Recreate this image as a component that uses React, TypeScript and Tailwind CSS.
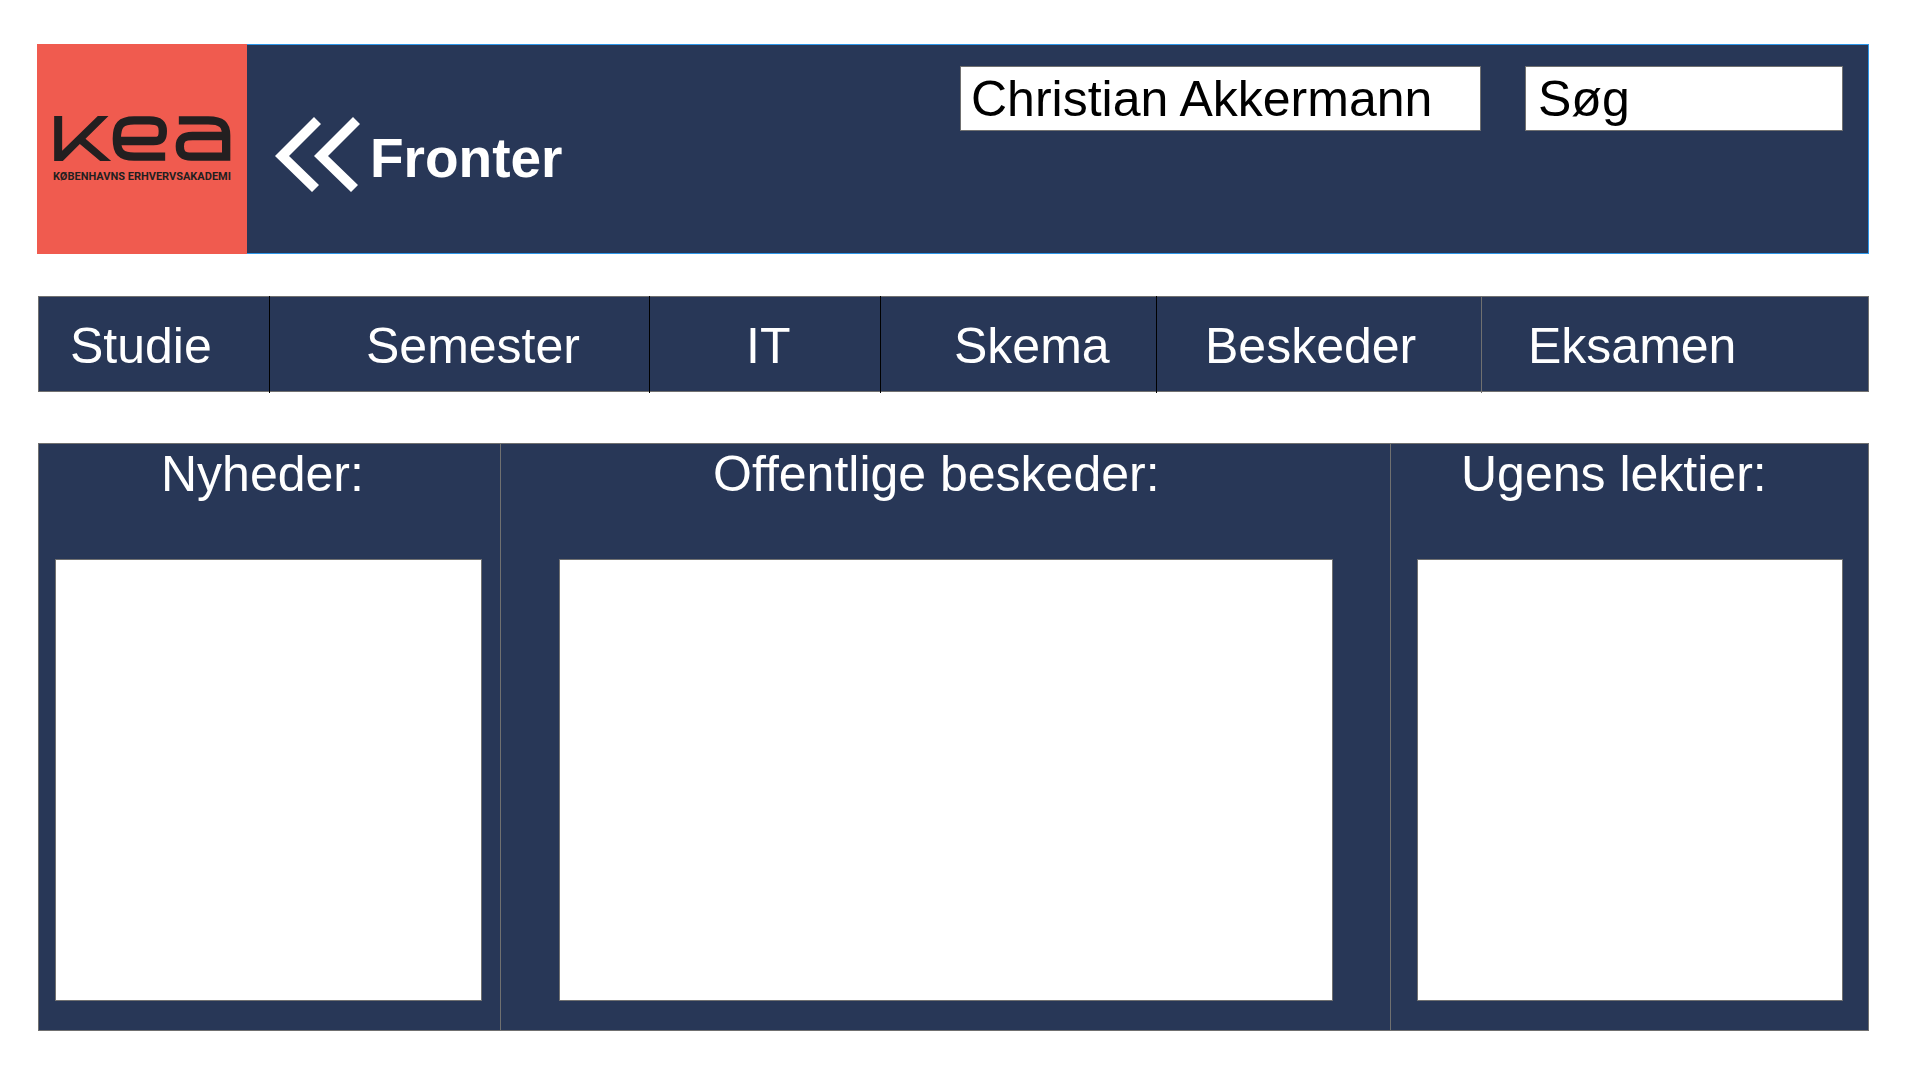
const navItems = [
  { label: "Studie", style: "pl-[31px]" },
  { label: "Semester", style: "border-l border-black pl-24" },
  { label: "IT", style: "border-l border-black pl-24" },
  { label: "Skema", style: "border-l border-black pl-[73px]" },
  { label: "Beskeder", style: "border-l border-black pl-12" },
  { label: "Eksamen", style: "border-l border-[#707070] pl-[46px]" },
];

const panels = [
  { title: "Nyheder:", column: "pl-4 pr-[18px]", heading: "pl-[106px]" },
  {
    title: "Offentlige beskeder:",
    column: "border-l border-[#707070] pl-[58px] pr-[57px]",
    heading: "pl-[154px]",
  },
  {
    title: "Ugens lektier:",
    column: "border-l border-[#707070] pl-[26px] pr-[25px]",
    heading: "pl-11",
  },
];

function KeaMark() {
  return (
    <svg viewBox="0 0 530 135" className="h-[45px] w-[177px]" role="img" aria-label="kea">
      <path
        d="M0 0H24V104L131 0H163L94 68L171 135H138L77 84L26 135H0Z"
        fill="#231f20"
      />
      <g fill="none" stroke="#231f20" strokeWidth="25">
        <path d="M333 122H240C200 122 188 108 188 68S200 13 240 13H286C318 13 326 24 326 45S322 75 298 75H190" />
        <path d="M374 13H462C503 13 516 26 516 58V122H412C386 122 377 114 377 91S388 60 415 60H516" />
      </g>
    </svg>
  );
}

function Chevrons() {
  return (
    <svg viewBox="0 0 255 225" className="h-[75px] w-[85px] shrink-0" fill="#fff" aria-hidden="true">
      <path d="M0 117L117 0L138 21L42 117L132 204L111 225Z" />
      <path d="M117 117L234 0L255 21L159 117L249 204L228 225Z" />
    </svg>
  );
}

export default function App() {
  return (
    <div className="min-h-screen bg-white pt-11 pr-[51px] pb-12 pl-[37px] font-['Liberation_Sans',Arial,sans-serif] text-[50px] leading-[60px] text-white">
      <header className="flex h-[210px]">
        <a
          href="#kea"
          className="flex w-[210px] shrink-0 flex-col items-center bg-[#f05b4f] pt-[72px]"
        >
          <KeaMark />
          <span className="mt-2 font-[Roboto,'Liberation_Sans',sans-serif] text-[11px] leading-4 font-bold whitespace-nowrap text-[#231f20]">
            KØBENHAVNS ERHVERVSAKADEMI
          </span>
        </a>
        <div className="flex min-w-0 flex-1 items-start justify-between border border-l-0 border-[#2d96e8] bg-[#283757] pr-[25px] pl-7">
          <a href="#fronter" className="mt-[72px] flex items-end gap-[10px]">
            <Chevrons />
            <span className="text-[55px] leading-[68px] font-bold">Fronter</span>
          </a>
          <div className="mt-[21px] flex min-w-0 gap-11 text-black">
            <input
              type="text"
              aria-label="Bruger"
              defaultValue="Christian Akkermann"
              className="h-[65px] w-[521px] min-w-0 border border-[#707070] bg-white px-[10px]"
            />
            <input
              type="text"
              aria-label="Søg"
              placeholder="Søg"
              className="h-[65px] w-[318px] min-w-0 border border-[#707070] bg-white px-3 placeholder:text-black placeholder:opacity-100"
            />
          </div>
        </div>
      </header>

      <nav className="mt-[42px] ml-px h-24 border border-[#707070] bg-[#283757]">
        <ul className="-mt-px grid h-[97px] grid-cols-[230fr_380fr_231fr_276fr_325fr_387fr]">
          {navItems.map((item) => (
            <li key={item.label} className={item.style}>
              <a href={"#" + item.label.toLowerCase()} className="block pt-5">
                {item.label}
              </a>
            </li>
          ))}
        </ul>
      </nav>

      <main className="mt-[51px] ml-px grid grid-cols-[461fr_890fr_478fr] border border-[#707070] bg-[#283757]">
        {panels.map((panel) => (
          <section key={panel.title} className={panel.column + " pb-[29px]"}>
            <h2 className={panel.heading}>{panel.title}</h2>
            <div className="mt-[55px] h-[442px] border border-[#707070] bg-white" />
          </section>
        ))}
      </main>
    </div>
  );
}
